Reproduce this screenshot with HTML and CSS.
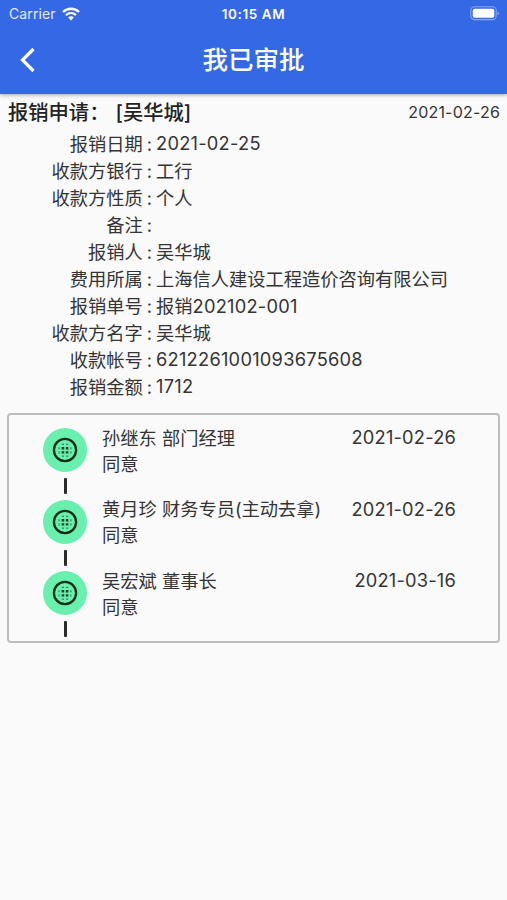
FILE: index.html
```html
<!DOCTYPE html>
<html lang="zh-CN">
<head>
<meta charset="utf-8">
<title>我已审批</title>
<link rel="stylesheet" href="styles.css">
</head>
<body>
<svg class="defs" width="0" height="0" aria-hidden="true">
  <symbol id="globe" viewBox="0 0 26 26">
    <circle cx="13" cy="13" r="11.1" fill="none" stroke="#0c2c18" stroke-width="2.3"/>
    <path d="M9.6 10h2.6v2.4H9.6zM13.8 10h2.6v2.4h-2.6zM9.6 14.2h2.6v2.4H9.6zM13.8 14.2h2.6v2.4h-2.6z" fill="#0c2c18" opacity=".9"/>
    <path d="M6.5 10.2h1.2v2H6.5zM18.3 10.2h1.2v2h-1.2zM6.5 14.4h1.2v2H6.5zM18.3 14.4h1.2v2h-1.2zM9.8 6.8h2.2v1.2H9.8zM14 6.8h2.2v1.2H14zM9.8 18.5h2.2v1.2H9.8zM14 18.5h2.2v1.2H14z" fill="#0c2c18" opacity=".55"/>
  </symbol>
</svg>
<header class="header">
  <div class="status">
    <div class="carrier"><span>Carrier</span>
      <svg width="18" height="14" viewBox="0 0 18 14"><g fill="none" stroke="#fff" stroke-width="2.4"><path d="M1 5C5.5.6 12.5.6 17 5"/><path d="M4 8.1c2.9-2.7 7.1-2.7 10 0"/></g><path d="M6.2 10.4c1.6-1.5 4-1.5 5.6 0L9 13.4z" fill="#fff"/></svg>
    </div>
    <div class="time">10:15 AM</div>
    <svg class="battery" width="31" height="15" viewBox="0 0 31 15"><rect x="1.8" y=".8" width="25.4" height="12.8" rx="3.8" fill="none" stroke="#8aa8f2" stroke-width="1.1"/><rect x="3.7" y="2.7" width="21.6" height="9" rx="2" fill="#fff"/><path d="M28.6 5c1.7.7 1.7 3.7 0 4.4z" fill="#8aa8f2"/></svg>
  </div>
  <div class="nav">
    <svg class="back" width="16" height="26" viewBox="0 0 16 26"><path d="M13.5 2 2.5 13l11 11" fill="none" stroke="#fff" stroke-width="3.2"/></svg>
    <h1>我已审批</h1>
  </div>
</header>
<main>
  <div class="summary"><h2><span>报销申请：</span><span>[吴华城]</span></h2><time>2021-02-26</time></div>
  <dl class="details">
    <dt>报销日期</dt><dd class="num">2021-02-25</dd>
    <dt>收款方银行</dt><dd>工行</dd>
    <dt>收款方性质</dt><dd>个人</dd>
    <dt>备注</dt><dd></dd>
    <dt>报销人</dt><dd>吴华城</dd>
    <dt>费用所属</dt><dd>上海信人建设工程造价咨询有限公司</dd>
    <dt>报销单号</dt><dd>报销<span class="num">202102-001</span></dd>
    <dt>收款方名字</dt><dd>吴华城</dd>
    <dt>收款帐号</dt><dd class="num">6212261001093675608</dd>
    <dt>报销金额</dt><dd class="num">1712</dd>
  </dl>
  <section class="steps">
    <div class="step"><div class="rail"><div class="dot"><svg width="26" height="26"><use href="#globe"/></svg></div><i></i></div><div class="who"><p>孙继东 部门经理</p><p>同意</p></div><time>2021-02-26</time></div>
    <div class="step"><div class="rail"><div class="dot"><svg width="26" height="26"><use href="#globe"/></svg></div><i></i></div><div class="who"><p>黄月珍 财务专员(主动去拿)</p><p>同意</p></div><time>2021-02-26</time></div>
    <div class="step"><div class="rail"><div class="dot"><svg width="26" height="26"><use href="#globe"/></svg></div><i></i></div><div class="who"><p>吴宏斌 董事长</p><p>同意</p></div><time>2021-03-16</time></div>
  </section>
</main>
</body>
</html>
```
FILE: styles.css
```css
* { box-sizing: border-box; margin: 0; padding: 0; }
body { min-height: 900px; background: #fafafa; color: #343434; font-family: Inter, "Noto Sans CJK SC", sans-serif; font-size: 18.25px; }
.defs { display: block; }
.header { height: 94px; background: #3468e5; color: #fff; box-shadow: 0 1px 4px rgba(0,0,0,.35); }
.status { height: 27px; display: grid; grid-template-columns: 1fr auto 1fr; align-items: center; padding: 0 7px 0 9px; font-size: 14px; }
.carrier { display: flex; align-items: center; gap: 6px; color: #e4ebff; letter-spacing: .1px; }
.time { font-weight: 600; font-size: 13.5px; letter-spacing: .6px; margin-right: 2px; }
.battery { justify-self: end; }
.nav { height: 65px; display: grid; grid-template-columns: 60px 1fr 60px; align-items: center; }
.back { margin-left: 20px; }
h1 { font-size: 25.5px; font-weight: 500; text-align: center; line-height: 36px; }
.summary { height: 37px; display: flex; justify-content: space-between; align-items: center; padding: 0 8px; }
h2 { display: flex; gap: 6px; font-size: 20.3px; font-weight: 500; line-height: 30px; color: #222; }
.summary time { font-size: 16px; letter-spacing: .2px; margin-right: -1px; margin-top: -1px; }
.details { display: grid; grid-template-columns: 152px 1fr; grid-auto-rows: 27px; column-gap: 4px; line-height: 27px; }
dt { text-align: right; }
dt::after { content: ":"; margin-left: 4px; }
.num { letter-spacing: .25px; }
dd.num { margin-top: -.6px; }
.steps { margin: 12px 7px 0; height: 230px; border: 2px solid #bdbdbd; border-radius: 4px; padding-top: 13px; }
.step { height: 71.5px; display: flex; padding: 0 42px 0 34px; }
.rail { width: 44px; display: flex; flex-direction: column; align-items: center; gap: 6px; }
.dot { width: 44px; height: 44px; border-radius: 50%; background: #69f0ae; display: grid; place-items: center; }
.rail i { width: 3px; height: 16px; border-radius: 1px; background: #2b2b2b; }
.who { flex: 1; margin-left: 15px; margin-top: -3.5px; white-space: nowrap; }
.who p { line-height: 26px; }
.step time { line-height: 26px; margin-top: -4px; letter-spacing: .2px; }
```
